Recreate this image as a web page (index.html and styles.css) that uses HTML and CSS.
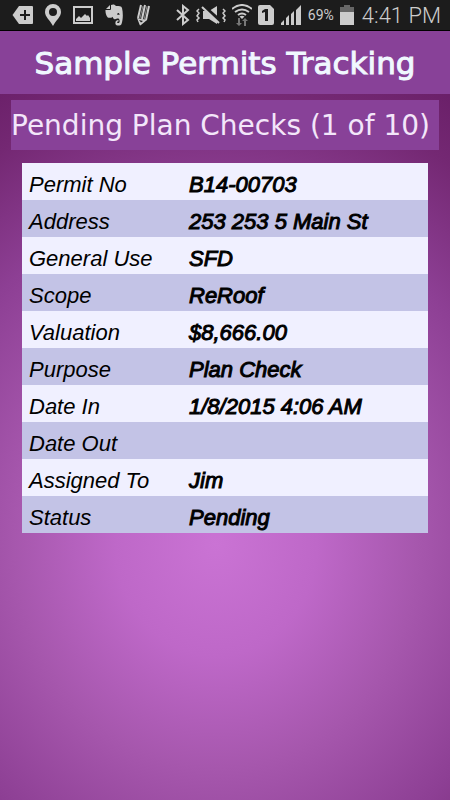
FILE: index.html
```html
<!DOCTYPE html>
<html lang="en">
<head>
    <meta charset="UTF-8">
    <meta name="viewport" content="width=device-width, initial-scale=1.0">
    <title>Sample Permits Tracking</title>
    <link rel="stylesheet" href="styles.css">
</head>
<body>
    <div class="status-bar">
        <div class="notifications">
            <!-- Tag with plus -->
            <svg width="22" height="20" viewBox="0 0 22 20">
                <path fill="#ccc" d="M7 1h13q1 0 1 1v16q0 1-1 1H7L.5 10z"/>
                <path stroke="#1c1c1c" stroke-width="2" d="M8 10h10M13 5v10"/>
            </svg>
            <!-- Map pin -->
            <svg width="16" height="22" viewBox="0 0 16 22">
                <path fill="#ccc" fill-rule="evenodd" d="M8 0a8 8 0 0 1 8 8c0 5-5 8-8 14C5 16 0 13 0 8a8 8 0 0 1 8-8zm0 4a4 4 0 1 0 0 8 4 4 0 0 0 0-8z"/>
            </svg>
            <!-- Picture -->
            <svg width="22" height="20" viewBox="0 0 22 20">
                <rect x="2" y="2" width="18" height="16" fill="none" stroke="#ccc" stroke-width="2"/>
                <path fill="#ccc" d="M4 16v-2l3-3 2 2 4-4 2 2 1-1 2 3v3z"/>
            </svg>
            <!-- Elephant -->
            <svg width="18" height="22" viewBox="0 0 18 22">
                <path fill="#ccc" d="M5 1v4H1z"/>
                <path fill="#ccc" fill-rule="evenodd" d="M6 1c2-1 4-.5 5 1 3 0 5.500 0 6 2 1.300 5 1 12-.5 16-.7 2-5.500 2-6 0-.5-3 1-4 3-4v1.500c-2 0-1.700 1.500-.3 1.500 1.700 0 1.800-2.500.8-4-1.500-1.500-3 1-5 0-.8-.4-1-1-1.200-2.200C7 14 5.500 14 3.500 13.700 1.500 13 .3 9 .5 6H5q1 0 1-1zM13 9c1 0 1.600.7 1.500 2-.8-.3-1.500-.3-2.200 0 0-1.200.2-2 .7-2z"/>
            </svg>
            <!-- Pencil -->
            <svg width="20" height="22" viewBox="0 0 20 22">
                <g stroke="#ccc" stroke-width="2">
                    <path d="M7 1 4 14M11 1 8 15M15 2l-3 14"/>
                </g>
                <path stroke="#888" d="M9 2 6 14M13 2l-3 14"/>
                <path fill="#ccc" d="m3 14 10 2-6 5q-1 1-1.500-.5z"/>
                <path fill="#1c1c1c" d="m5 16 4 1-2 1.500z"/>
            </svg>
        </div>
        <div class="indicators">
            <!-- Bluetooth -->
            <svg width="14" height="22" viewBox="0 0 14 22">
                <path fill="none" stroke="#ccc" stroke-width="2" d="m1 6 11 10-5 4V2l5 4L1 16"/>
            </svg>
            <!-- Sound off, vibrating -->
            <svg width="30" height="20" viewBox="0 0 30 20">
                <path fill="#ccc" d="M7 6h6l8-5v18l-8-5H7z"/>
                <path stroke="#1c1c1c" stroke-width="4" d="m7 1 17 15"/>
                <path stroke="#ccc" stroke-width="2" d="m6 2 17 16"/>
                <path fill="none" stroke="#ccc" stroke-width="1.500" d="M3 4 1 6l2 2-2 3 2 2-2 2 1 2M27 4l2 2-2 2 2 3-2 2 2 2-1 2"/>
            </svg>
            <!-- Wi-Fi -->
            <svg width="20" height="22" viewBox="0 0 20 22">
                <g fill="none" stroke="#ccc" stroke-width="2">
                    <path d="M0 5q10-8 20 0M3 8q7-5 14 0M6 11q4-3 8 0"/>
                </g>
                <path fill="#ccc" d="M7.500 12.500q2.500-1.500 5 0L10 15z"/>
                <path fill="#777" d="M6 14h2v5h2l-3 3-3-3h2zM12 22h2v-5h2l-3-3-3 3h2z"/>
            </svg>
            <!-- SIM slot -->
            <svg width="16" height="20" viewBox="0 0 16 20">
                <path fill="#ccc" d="M2 0h10l4 4v14q0 2-2 2H2q-2 0-2-2V2q0-2 2-2z"/>
                <path fill="#1c1c1c" d="M7 4h3v12H7V7L4 8V6z"/>
            </svg>
            <!-- Signal -->
            <svg width="22" height="22" viewBox="0 0 22 22">
                <path fill="#ccc" d="M1 21v-2l3-3v5zM6 21v-7l3-3v10zM11 21v-11l3-3v14zM16 21V6l5-5v20z"/>
            </svg>
            <span class="battery-level">69%</span>
            <!-- Battery -->
            <svg width="14" height="20" viewBox="0 0 14 20">
                <path fill="#666" d="M0 2h4V0h6v2h4v6H0z"/>
                <path fill="#ccc" d="M0 7h14v13H0z"/>
            </svg>
            <span class="clock">4:41 PM</span>
        </div>
    </div>

    <h1 class="page-title">Sample Permits Tracking</h1>

    <div class="content">
        <h2 class="section-title">Pending Plan Checks (1 of 10)</h2>
        <table class="permit-table">
            <tbody>
                <tr><th scope="row">Permit No</th><td>B14-00703</td></tr>
                <tr><th scope="row">Address</th><td>253 253 5 Main St</td></tr>
                <tr><th scope="row">General Use</th><td>SFD</td></tr>
                <tr><th scope="row">Scope</th><td>ReRoof</td></tr>
                <tr><th scope="row">Valuation</th><td>$8,666.00</td></tr>
                <tr><th scope="row">Purpose</th><td>Plan Check</td></tr>
                <tr><th scope="row">Date In</th><td>1/8/2015 4:06 AM</td></tr>
                <tr><th scope="row">Date Out</th><td></td></tr>
                <tr><th scope="row">Assigned To</th><td>Jim</td></tr>
                <tr><th scope="row">Status</th><td>Pending</td></tr>
            </tbody>
        </table>
    </div>
</body>
</html>
```
FILE: styles.css
```css
* {
    box-sizing: border-box;
}

body {
    margin: 0;
    min-height: 100vh;
    font-family: "Liberation Sans", Arial, sans-serif;
    background: radial-gradient(ellipse 112% 70% at 48% 68%, #ca73d4 0%, #be68c8 20%, #a657ad 40%, #8d3f94 62%, #742873 82%, #641a62 100%);
}

.status-bar {
    display: flex;
    justify-content: space-between;
    align-items: center;
    height: 31px;
    padding: 0 9px 0 12px;
    background-color: #1c1c1c;
    border-bottom: 1px solid #000000;
    color: #cccccc;
    font-family: Roboto, sans-serif;
}

.notifications, .indicators {
    display: flex;
    align-items: center;
}

.notifications {
    gap: 11px;
}

.indicators {
    gap: 6px;
}

.battery-level {
    font-size: 14px;
}

.clock {
    padding-left: 2px;
    font-size: 22px;
    font-weight: 300;
    white-space: nowrap;
}

.page-title, .section-title {
    margin: 0;
    font-family: "DejaVu Sans", Verdana, sans-serif;
    font-weight: normal;
    white-space: nowrap;
    background-color: #884198;
}

.page-title {
    padding: 13px 0 12px;
    font-size: 31px;
    line-height: 38px;
    text-align: center;
    color: #f0f8ff;
    -webkit-text-stroke: 1px #f0f8ff;
}

.content {
    padding: 6px 11px;
}

.section-title {
    padding-top: 2px;
    font-size: 28px;
    line-height: 48px;
    color: #f3e6fa;
}

.permit-table {
    width: calc(100% - 22px);
    margin: 13px 11px 0;
    border-collapse: collapse;
    font-size: 22px;
    font-style: italic;
    line-height: 27px;
    color: #000000;
}

.permit-table tr {
    background-color: #f0f0ff;
}

.permit-table tr:nth-child(even) {
    background-color: #c3c3e6;
}

.permit-table th, .permit-table td {
    height: 37px;
    padding: 8px 7px 2px;
    font-weight: normal;
    text-align: left;
}

.permit-table th {
    width: 160px;
}

.permit-table td {
    -webkit-text-stroke: 1px #000000;
}
```
